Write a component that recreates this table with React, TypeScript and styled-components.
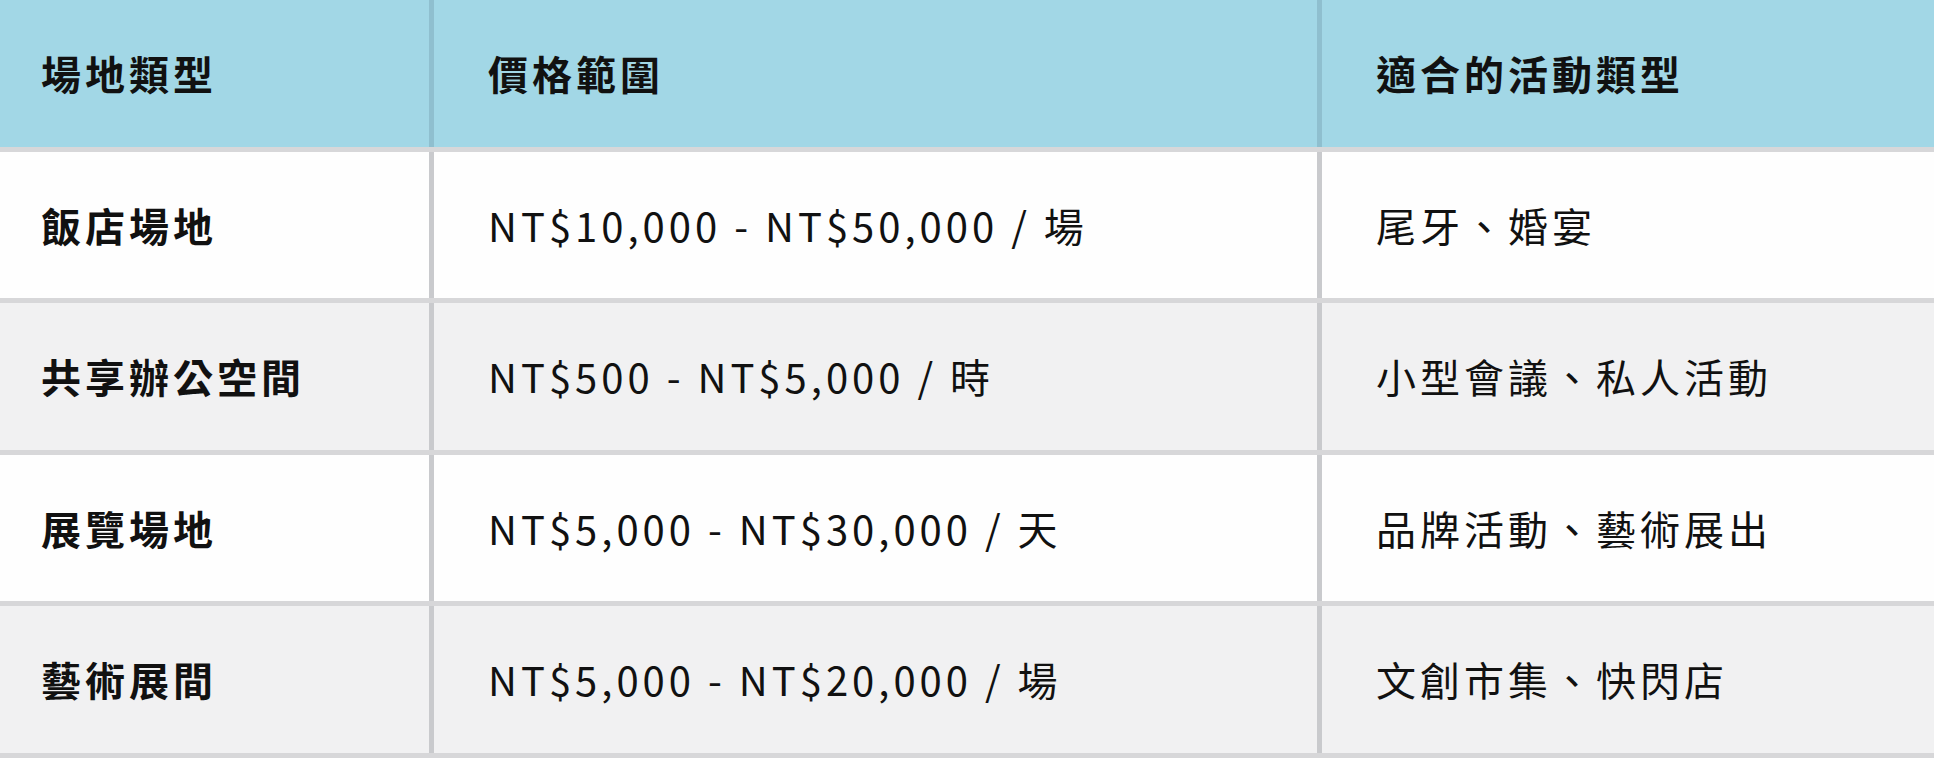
import React from 'react'
import styled, { createGlobalStyle } from 'styled-components'

interface Venue {
  type: string
  price: string
  events: string
}

const venues: Venue[] = [
  { type: '飯店場地', price: 'NT$10,000 - NT$50,000 / 場', events: '尾牙、婚宴' },
  { type: '共享辦公空間', price: 'NT$500 - NT$5,000 / 時', events: '小型會議、私人活動' },
  { type: '展覽場地', price: 'NT$5,000 - NT$30,000 / 天', events: '品牌活動、藝術展出' },
  { type: '藝術展間', price: 'NT$5,000 - NT$20,000 / 場', events: '文創市集、快閃店' },
]

const GlobalStyle = createGlobalStyle`
  * {
    box-sizing: border-box;
  }
  body {
    margin: 0;
    background: #ffffff;
    font-family: 'Noto Sans CJK TC', 'Noto Sans', sans-serif;
    color: #111111;
  }
`

const App: React.FC = () => {
  return (
    <>
      <GlobalStyle />
      <Table>
        <HeaderRow>
          <HeadCell $first>場地類型</HeadCell>
          <HeadCell>價格範圍</HeadCell>
          <HeadCell $last>適合的活動類型</HeadCell>
        </HeaderRow>
        {venues.map((venue, index) => (
          <BodyRow key={venue.type} $striped={index % 2 === 1}>
            <BodyCell $first $bold>
              {venue.type}
            </BodyCell>
            <BodyCell>{venue.price}</BodyCell>
            <BodyCell $last>{venue.events}</BodyCell>
          </BodyRow>
        ))}
      </Table>
    </>
  )
}

export default App

const Table = styled.div`
  width: 100%;
  display: flex;
  flex-direction: column;
`

const RowBase = styled.div`
  display: grid;
  grid-template-columns: 434px 888px 1fr;
  height: 151.5px;
  border-bottom: 5px solid #d7d7d9;
`

const HeaderRow = styled(RowBase)`
  background-color: #a2d7e6;
`

const BodyRow = styled(RowBase)<{ $striped: boolean }>`
  background-color: ${(props) => (props.$striped ? '#f1f1f2' : '#fefefe')};
`

const CellBase = styled.div<{ $first?: boolean; $last?: boolean }>`
  display: flex;
  align-items: center;
  padding-left: ${(props) => (props.$first ? '41px' : '54px')};
  font-size: 40px;
  letter-spacing: 4px;
  line-height: 1.2;
  white-space: nowrap;
`

const HeadCell = styled(CellBase)`
  font-weight: 700;
  border-right: ${(props) => (props.$last ? 'none' : '5px solid #8fbfcf')};
`

const BodyCell = styled(CellBase)<{ $bold?: boolean }>`
  font-weight: ${(props) => (props.$bold ? 700 : 400)};
  border-right: ${(props) => (props.$last ? 'none' : '5px solid #c9cacd')};
`
